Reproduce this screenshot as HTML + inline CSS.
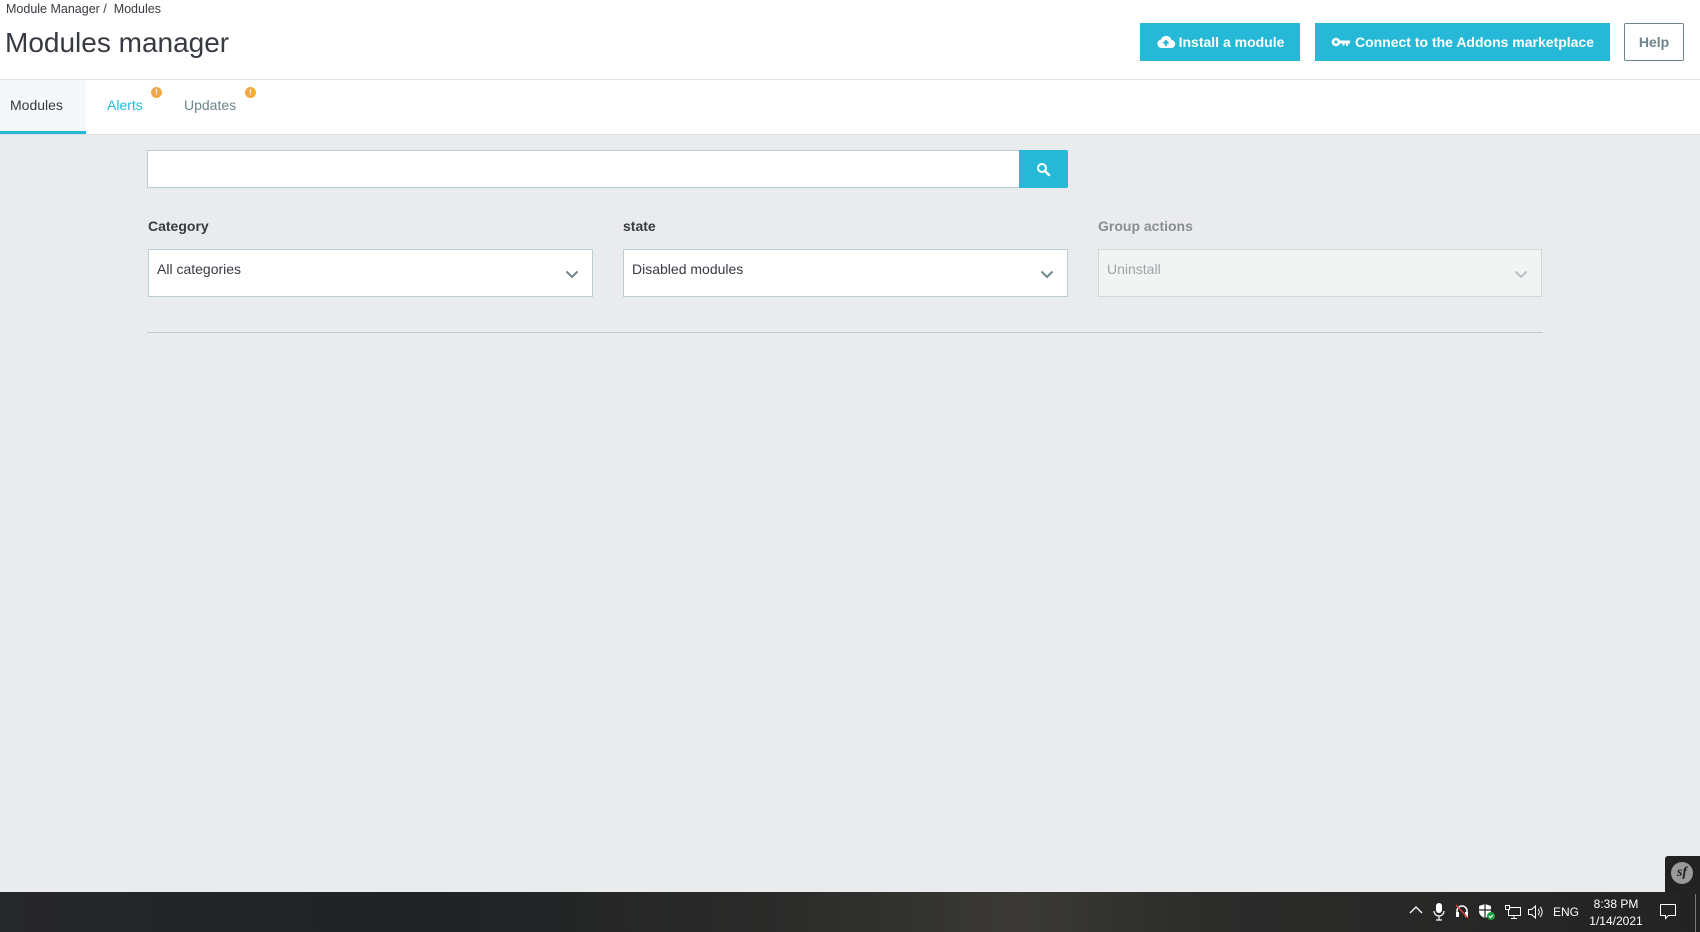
<!DOCTYPE html>
<html><head><meta charset="utf-8"><style>
*{margin:0;padding:0;box-sizing:border-box}
body{width:1700px;height:932px;overflow:hidden;background:#eaebed;font-family:"Liberation Sans",sans-serif;color:#363a41;position:relative}
.abs{position:absolute}
.hdr{left:0;top:0;width:1700px;height:80px;background:#fff;border-bottom:1px solid #dcdfe3}
.tabs{left:0;top:80px;width:1700px;height:55px;background:#fff;border-bottom:1px solid #dcdfe3}
.btn{background:#25b9d7;color:#fff;font-weight:bold;font-size:14px;display:flex;align-items:center;justify-content:center;height:38px;top:23px}
.sel{background:#fff;border:1px solid #bbcdd2;height:48px;top:249px;font-size:14px;padding:11px 0 0 8px}
.chev{position:absolute;right:13px;top:20px}
.lbl{font-size:14px;font-weight:bold;top:218px}
.badge{width:11px;height:11px;border-radius:50%;background:#f3aa3c;color:#fff;font-size:8px;font-weight:bold;text-align:center;line-height:11px}
.tb{left:0;top:892px;width:1700px;height:40px;background:linear-gradient(90deg,#262728 0%,#202224 25%,#2a2a29 45%,#3a3935 60%,#2b2b2a 72%,#232323 100%)}
.tray{color:#fff;font-size:12px}
</style></head><body>
<div class="abs hdr"></div>
<div class="abs" style="left:6px;top:2px;font-size:12.5px;color:#363a41">Module Manager&nbsp;/&nbsp; Modules</div>
<div class="abs" style="left:5px;top:27px;font-size:28px;color:#363a41">Modules manager</div>

<div class="abs btn" style="left:1140px;width:160px"><svg width="20" height="16" viewBox="0 0 20 16" style="margin-right:3px"><path d="M5 14h10a4 4 0 0 0 .5-8A5.5 5.5 0 0 0 5 5.5 4.3 4.3 0 0 0 5 14z" fill="#fff"/><path d="M10 12V7.5M7.5 9.5L10 7l2.5 2.5" stroke="#25b9d7" stroke-width="2" fill="none"/></svg>Install a module</div>
<div class="abs btn" style="left:1315px;width:295px"><svg width="20" height="12" viewBox="0 0 20 12" style="margin-right:4px"><circle cx="5" cy="6" r="4.3" fill="#fff"/><circle cx="5" cy="6" r="1.6" fill="#25b9d7"/><path d="M8 4.5h11v3h-2v2.5h-2V7.5h-1.5v2h-2v-2H8z" fill="#fff"/></svg>Connect to the Addons marketplace</div>
<div class="abs" style="left:1624px;top:23px;width:60px;height:38px;border:1px solid #6c868e;border-radius:2px;background:#fff;color:#6c868e;font-weight:bold;font-size:14px;display:flex;align-items:center;justify-content:center">Help</div>

<div class="abs tabs"></div>
<div class="abs" style="left:0;top:80px;width:86px;height:54px;background:#f4f8fb;border-bottom:3px solid #25b9d7"></div>
<div class="abs" style="left:10px;top:97px;font-size:14px;color:#363a41">Modules</div>
<div class="abs" style="left:107px;top:97px;font-size:14px;color:#25b9d7">Alerts</div>
<div class="abs badge" style="left:151px;top:87px">!</div>
<div class="abs" style="left:184px;top:97px;font-size:14px;color:#6c868e">Updates</div>
<div class="abs badge" style="left:245px;top:87px">!</div>

<div class="abs" style="left:147px;top:150px;width:873px;height:38px;background:#fff;border:1px solid #bbcdd2"></div>
<div class="abs" style="left:1019px;top:150px;width:49px;height:38px;background:#25b9d7;border-radius:0 2px 2px 0"><svg width="16" height="16" viewBox="0 0 16 16" style="position:absolute;left:17px;top:12px"><circle cx="6" cy="6" r="4" stroke="#fff" stroke-width="2" fill="none"/><path d="M9 9l4 4" stroke="#fff" stroke-width="2.4" stroke-linecap="round"/></svg></div>

<div class="abs lbl" style="left:148px">Category</div>
<div class="abs lbl" style="left:623px">state</div>
<div class="abs lbl" style="left:1098px;color:#8a8d91">Group actions</div>

<div class="abs sel" style="left:148px;width:445px">All categories<svg class="chev" width="14" height="9" viewBox="0 0 14 9"><path d="M1.5 1.5l5.5 5.5 5.5-5.5" stroke="#6c868e" stroke-width="2" fill="none"/></svg></div>
<div class="abs sel" style="left:623px;width:445px">Disabled modules<svg class="chev" width="14" height="9" viewBox="0 0 14 9"><path d="M1.5 1.5l5.5 5.5 5.5-5.5" stroke="#6c868e" stroke-width="2" fill="none"/></svg></div>
<div class="abs sel" style="left:1098px;width:444px;background:#f2f4f4;border-color:#d0dadd;color:#a0a4a8">Uninstall<svg class="chev" width="14" height="9" viewBox="0 0 14 9"><path d="M1.5 1.5l5.5 5.5 5.5-5.5" stroke="#b8c3c6" stroke-width="2" fill="none"/></svg></div>

<div class="abs" style="left:147px;top:332px;width:1396px;height:1px;background:#bbcdd2"></div>

<div class="abs" style="left:1665px;top:856px;width:35px;height:36px;background:#222;border-radius:3px 0 0 0"></div>
<div class="abs" style="left:1671px;top:862px;width:22px;height:22px;border-radius:50%;background:#9a9a9a;color:#222;font-family:'Liberation Serif',serif;font-style:italic;font-weight:bold;font-size:14px;text-align:center;line-height:22px">sf</div>

<div class="abs tb"></div>
<svg class="abs" style="left:1408px;top:904px" width="16" height="12" viewBox="0 0 16 12"><path d="M2 9l6-6 6 6" stroke="#fff" stroke-width="1.3" fill="none"/></svg>
<svg class="abs" style="left:1432px;top:902px" width="14" height="20" viewBox="0 0 14 20"><rect x="4" y="1" width="6" height="10" rx="3" fill="#fff"/><path d="M2 9a5 5 0 0 0 10 0M7 14v4M4 18h6" stroke="#fff" stroke-width="1.2" fill="none"/></svg>
<svg class="abs" style="left:1454px;top:903px" width="16" height="16" viewBox="0 0 16 16"><path d="M3 12V8a5 5 0 0 1 10 0v4" stroke="#fff" stroke-width="1.5" fill="none"/><rect x="2" y="9" width="3" height="5" fill="#fff"/><rect x="11" y="9" width="3" height="5" fill="#fff"/><path d="M2 2l12 13" stroke="#e04040" stroke-width="1.3"/></svg>
<svg class="abs" style="left:1478px;top:903px" width="18" height="18" viewBox="0 0 18 18"><path d="M7 1L1 3v5c0 4 3 6 6 7 3-1 6-3 6-7V3z" fill="#fff"/><path d="M7 1v14M1 7h12" stroke="#222" stroke-width="1.2"/><circle cx="13" cy="13" r="4" fill="#1e9c3b"/><path d="M11 13l1.5 1.5 2.5-2.5" stroke="#fff" stroke-width="1.2" fill="none"/></svg>
<svg class="abs" style="left:1504px;top:904px" width="18" height="16" viewBox="0 0 18 16"><rect x="4.5" y="3.5" width="12" height="8" stroke="#fff" fill="none"/><rect x="1.5" y="1.5" width="4" height="4" stroke="#fff" fill="#222"/><path d="M10 11.5v3M7 14.5h6" stroke="#fff"/></svg>
<svg class="abs" style="left:1527px;top:904px" width="18" height="16" viewBox="0 0 18 16"><path d="M1.5 5.5h3l4-3.5v12l-4-3.5h-3z" stroke="#fff" fill="none"/><path d="M11 5a4 4 0 0 1 0 6M13 3a7 7 0 0 1 0 10" stroke="#fff" fill="none"/></svg>
<div class="abs tray" style="left:1553px;top:905px;font-size:12px">ENG</div>
<div class="abs tray" style="left:1588px;top:896px;width:56px;text-align:center;line-height:17px">8:38 PM<br>1/14/2021</div>
<svg class="abs" style="left:1659px;top:903px" width="18" height="18" viewBox="0 0 18 18"><path d="M1.5 1.5h15v11h-7l-3 3v-3h-5z" stroke="#fff" fill="none"/></svg>
<div class="abs" style="left:1695px;top:894px;width:1px;height:38px;background:#777"></div>
</body></html>
